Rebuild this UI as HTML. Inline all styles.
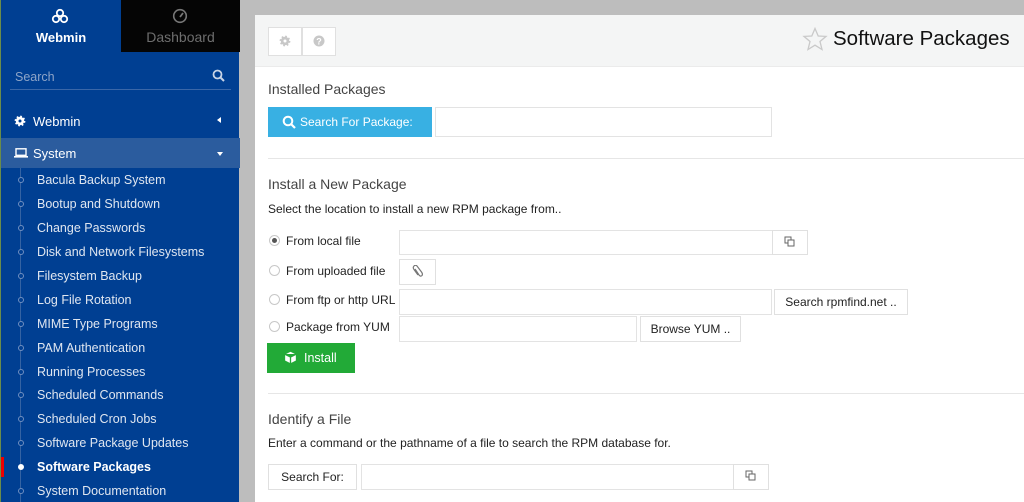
<!DOCTYPE html>
<html><head><meta charset="utf-8"><style>
*{box-sizing:border-box;margin:0;padding:0}
body{width:1024px;height:502px;overflow:hidden;background:#bdbdbd;font-family:"Liberation Sans",sans-serif;position:relative}
.a{position:absolute}
#sb{left:0;top:0;width:239px;height:502px;background:#003f92;border-left:1px solid #6a8c4a}
.item{position:absolute;left:36px;font-size:12.5px;color:#dfe6f0;white-space:nowrap}
.dot{position:absolute;left:17px;width:6px;height:6px;border:1px solid #6f8fc0;border-radius:50%;background:#003f92}
#main{left:255px;top:15px;width:769px;height:487px;background:#fff}
.hd{font-size:14px;color:#444}
.txt{font-size:12px;color:#222;white-space:nowrap}
.box{position:absolute;border:1px solid #e3e3e3;background:#fff}
.btn{position:absolute;border:1px solid #e0e0e0;background:#fff;font-size:12px;color:#222;text-align:center}
.rad{position:absolute;width:11px;height:11px;border:1px solid #c8c8c8;border-radius:50%;background:#fff}
.hr{position:absolute;width:756px;height:1px;background:#e6e6e6}
</style></head><body>
<div id="sb" class="a">
 <div class="a" style="left:120px;top:0;width:119px;height:52px;background:#050505"></div>
 <svg class="a" style="left:50px;top:8px" width="18" height="16" viewBox="0 0 18 16"><g fill="none" stroke="#fff" stroke-width="1.8"><circle cx="9" cy="5" r="3.2"/><circle cx="5" cy="11" r="3.2"/><circle cx="13" cy="11" r="3.2"/></g></svg>
 <div class="a" style="left:0;width:120px;top:30px;text-align:center;color:#fff;font-weight:bold;font-size:13px">Webmin</div>
 <svg class="a" style="left:171px;top:8px" width="16" height="16" viewBox="0 0 16 16"><circle cx="8" cy="8" r="6.3" fill="none" stroke="#777" stroke-width="1.6"/><path d="M8 9 L11 5" stroke="#777" stroke-width="1.8"/></svg>
 <div class="a" style="left:120px;width:119px;top:29px;text-align:center;color:#6e6e6e;font-size:14px">Dashboard</div>
 <div class="a" style="left:14px;top:70px;color:#8ea5c8;font-size:12.5px">Search</div>
 <svg class="a" style="left:211px;top:69px" width="13" height="13" viewBox="0 0 13 13"><circle cx="5.5" cy="5.5" r="4" fill="none" stroke="#c8d4e6" stroke-width="1.8"/><path d="M8.5 8.5 L12 12" stroke="#c8d4e6" stroke-width="2"/></svg>
 <div class="a" style="left:9px;top:89px;width:221px;height:1px;background:#3a67a8"></div>
 <svg class="a" style="left:13px;top:115px" width="12" height="12" viewBox="0 0 12 12"><circle cx="6" cy="6" r="4.2" fill="#fff"/><circle cx="6" cy="6" r="4.2" fill="none" stroke="#fff" stroke-width="2.4" stroke-dasharray="1.6 1.7"/><circle cx="6" cy="6" r="1.5" fill="#003f92"/></svg>
 <div class="a" style="left:32px;top:114px;color:#fff;font-size:13px">Webmin</div>
 <div class="a" style="left:216px;top:117px;width:0;height:0;border-top:3px solid transparent;border-bottom:3px solid transparent;border-right:4px solid #fff"></div>
 <div class="a" style="left:0;top:138px;width:239px;height:30px;background:#2b5c9e"></div>
 <svg class="a" style="left:13px;top:148px" width="14" height="10" viewBox="0 0 14 10"><rect x="2" y="0.8" width="10" height="6.5" fill="none" stroke="#fff" stroke-width="1.4"/><rect x="0" y="8" width="14" height="1.6" fill="#fff"/></svg>
 <div class="a" style="left:32px;top:146px;color:#fff;font-size:13px">System</div>
 <div class="a" style="left:216px;top:152px;width:0;height:0;border-left:3px solid transparent;border-right:3px solid transparent;border-top:4px solid #fff"></div>
 <div class="a" style="left:19px;top:168px;width:1px;height:334px;background:#3563a3"></div>
 <div class="dot" style="top:177px"></div><div class="item" style="top:173px">Bacula Backup System</div>
 <div class="dot" style="top:201px"></div><div class="item" style="top:197px">Bootup and Shutdown</div>
 <div class="dot" style="top:225px"></div><div class="item" style="top:221px">Change Passwords</div>
 <div class="dot" style="top:249px"></div><div class="item" style="top:245px">Disk and Network Filesystems</div>
 <div class="dot" style="top:273px"></div><div class="item" style="top:269px">Filesystem Backup</div>
 <div class="dot" style="top:297px"></div><div class="item" style="top:293px">Log File Rotation</div>
 <div class="dot" style="top:321px"></div><div class="item" style="top:317px">MIME Type Programs</div>
 <div class="dot" style="top:345px"></div><div class="item" style="top:341px">PAM Authentication</div>
 <div class="dot" style="top:369px"></div><div class="item" style="top:365px">Running Processes</div>
 <div class="dot" style="top:392px"></div><div class="item" style="top:388px">Scheduled Commands</div>
 <div class="dot" style="top:416px"></div><div class="item" style="top:412px">Scheduled Cron Jobs</div>
 <div class="dot" style="top:440px"></div><div class="item" style="top:436px">Software Package Updates</div>
 <div class="a" style="left:0;top:457px;width:3px;height:20px;background:#e00"></div>
 <div class="dot" style="top:464px;background:#fff;border-color:#fff"></div><div class="item" style="top:460px;color:#fff;font-weight:bold">Software Packages</div>
 <div class="dot" style="top:488px"></div><div class="item" style="top:484px">System Documentation</div>
</div>
<div id="main" class="a"></div>
<div class="a" style="left:255px;top:15px;width:769px;height:52px;background:#f4f5f5;border-bottom:1px solid #ebebeb"></div>
<div class="btn" style="left:268px;top:27px;width:34px;height:29px"></div>
<div class="btn" style="left:302px;top:27px;width:34px;height:29px"></div>
<svg class="a" style="left:279px;top:35px" width="12" height="12" viewBox="0 0 12 12"><circle cx="6" cy="6" r="4.2" fill="#c8c8c8"/><circle cx="6" cy="6" r="4.2" fill="none" stroke="#c8c8c8" stroke-width="2.4" stroke-dasharray="1.6 1.7"/><circle cx="6" cy="6" r="1.5" fill="#fff"/></svg>
<svg class="a" style="left:313px;top:35px" width="12" height="12" viewBox="0 0 12 12"><circle cx="6" cy="6" r="5.5" fill="#c8c8c8"/><text x="6" y="9.5" font-size="9" font-weight="bold" fill="#fff" text-anchor="middle" font-family="Liberation Sans">?</text></svg>
<svg class="a" style="left:802px;top:27px" width="26" height="24" viewBox="0 0 26 24"><path d="M13 1.5 L16.2 9 L24 9.4 L18 14.5 L20 22.5 L13 18.2 L6 22.5 L8 14.5 L2 9.4 L9.8 9 Z" fill="none" stroke="#c9c9c9" stroke-width="1.3"/></svg>
<div class="a" style="left:833px;top:27px;font-size:20.5px;color:#111;white-space:nowrap">Software Packages</div>

<div class="a hd" style="left:268px;top:81px">Installed Packages</div>
<div class="a" style="left:268px;top:107px;width:164px;height:30px;background:#38b0e3"></div>
<svg class="a" style="left:282px;top:115px" width="14" height="14" viewBox="0 0 14 14"><circle cx="6" cy="6" r="4.3" fill="none" stroke="#fff" stroke-width="2"/><path d="M9 9 L13 13" stroke="#fff" stroke-width="2.2"/></svg>
<div class="a" style="left:300px;top:115px;color:#fff;font-size:12px">Search For Package:</div>
<div class="box" style="left:435px;top:107px;width:337px;height:30px"></div>
<div class="hr" style="left:268px;top:158px"></div>

<div class="a hd" style="left:268px;top:176px">Install a New Package</div>
<div class="a txt" style="left:268px;top:202px">Select the location to install a new RPM package from..</div>
<div class="rad" style="left:269px;top:235px"></div><div class="a" style="left:272px;top:238px;width:5px;height:5px;border-radius:50%;background:#555"></div>
<div class="a txt" style="left:286px;top:234px">From local file</div>
<div class="box" style="left:399px;top:230px;width:374px;height:25px"></div>
<div class="btn" style="left:772px;top:230px;width:36px;height:25px"></div>
<svg class="a" style="left:784px;top:236px" width="11" height="11" viewBox="0 0 11 11"><rect x="1" y="1" width="6" height="6" fill="none" stroke="#666"/><rect x="4" y="4" width="6" height="6" fill="#fff" stroke="#666"/></svg>
<div class="rad" style="left:269px;top:265px"></div>
<div class="a txt" style="left:286px;top:264px">From uploaded file</div>
<div class="btn" style="left:399px;top:259px;width:37px;height:26px"></div>
<svg class="a" style="left:412px;top:265px" width="11" height="13" viewBox="0 0 11 13"><path d="M3 4 L7 10 Q8.5 12 10 10.5 Q11 9 9.5 7 L5 1 Q3.5 -0.5 2 1 Q0.5 2.5 2 4.5 L6 10" fill="none" stroke="#777" stroke-width="1.2"/></svg>
<div class="rad" style="left:269px;top:294px"></div>
<div class="a txt" style="left:286px;top:293px">From ftp or http URL</div>
<div class="box" style="left:399px;top:289px;width:373px;height:26px"></div>
<div class="btn" style="left:774px;top:289px;width:134px;height:26px;line-height:24px">Search rpmfind.net ..</div>
<div class="rad" style="left:269px;top:321px"></div>
<div class="a txt" style="left:286px;top:320px">Package from YUM</div>
<div class="box" style="left:399px;top:316px;width:238px;height:26px"></div>
<div class="btn" style="left:640px;top:316px;width:101px;height:26px;line-height:24px">Browse YUM ..</div>
<div class="a" style="left:267px;top:343px;width:88px;height:30px;background:#22aa37"></div>
<svg class="a" style="left:283px;top:350px" width="15" height="15" viewBox="0 0 15 15"><path d="M7.5 1 L13.5 4 L13.5 11 L7.5 14 L1.5 11 L1.5 4 Z M1.5 4 L7.5 7 L13.5 4 M7.5 7 L7.5 14" fill="#fff" stroke="#22aa37" stroke-width="1.3"/></svg>
<div class="a" style="left:304px;top:351px;color:#fff;font-size:12.5px">Install</div>
<div class="hr" style="left:268px;top:393px"></div>

<div class="a hd" style="left:268px;top:411px">Identify a File</div>
<div class="a txt" style="left:268px;top:436px">Enter a command or the pathname of a file to search the RPM database for.</div>
<div class="btn" style="left:268px;top:464px;width:89px;height:26px;line-height:24px">Search For:</div>
<div class="box" style="left:361px;top:464px;width:373px;height:26px"></div>
<div class="btn" style="left:733px;top:464px;width:36px;height:26px"></div>
<svg class="a" style="left:745px;top:470px" width="11" height="11" viewBox="0 0 11 11"><rect x="1" y="1" width="6" height="6" fill="none" stroke="#666"/><rect x="4" y="4" width="6" height="6" fill="#fff" stroke="#666"/></svg>
</body></html>
